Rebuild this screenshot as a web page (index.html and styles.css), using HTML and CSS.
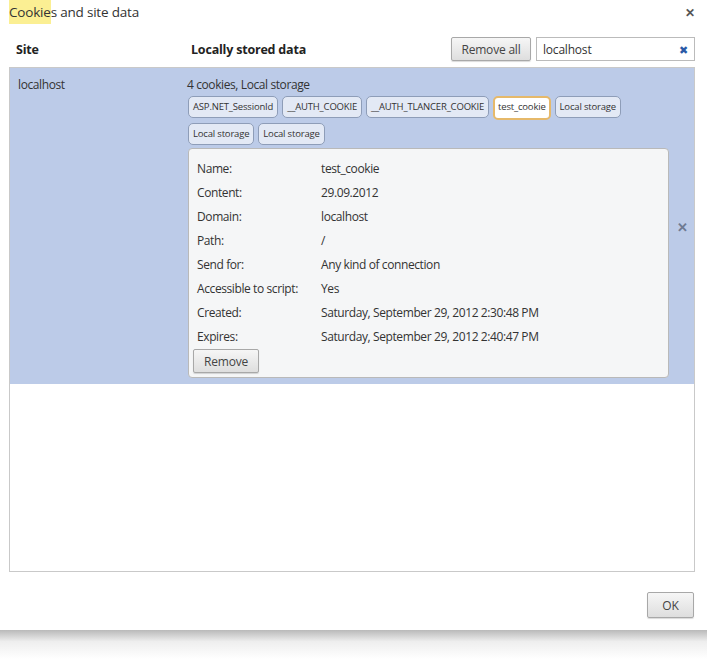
FILE: index.html
```html
<!DOCTYPE html>
<html>
<head>
<meta charset="utf-8">
<link rel="stylesheet" href="styles.css">
</head>
<body>
<div class="dialog">
  <div class="titlebar">
    <div class="title"><span class="hl">Cookie</span>s and site data</div>
    <div class="close">&#x2715;</div>
  </div>
  <div class="header">
    <div class="h-site">Site</div>
    <div class="h-data">Locally stored data</div>
    <button class="btn removeall">Remove all</button>
    <div class="search"><span>localhost</span><span class="sx">&#x2716;</span></div>
  </div>
  <div class="list">
    <div class="row">
      <div class="site">localhost</div>
      <div class="data">
        <div class="summary">4 cookies, Local storage</div>
        <div class="tags">
          <span class="tag">ASP.NET_SessionId</span>
          <span class="tag">__AUTH_COOKIE</span>
          <span class="tag">__AUTH_TLANCER_COOKIE</span>
          <span class="tag sel">test_cookie</span>
          <span class="tag">Local storage</span>
        </div>
        <div class="tags">
          <span class="tag">Local storage</span>
          <span class="tag">Local storage</span>
        </div>
        <div class="details">
          <div class="kv"><span class="k">Name:</span><span>test_cookie</span></div>
          <div class="kv"><span class="k">Content:</span><span>29.09.2012</span></div>
          <div class="kv"><span class="k">Domain:</span><span>localhost</span></div>
          <div class="kv"><span class="k">Path:</span><span>/</span></div>
          <div class="kv"><span class="k">Send for:</span><span>Any kind of connection</span></div>
          <div class="kv"><span class="k">Accessible to script:</span><span>Yes</span></div>
          <div class="kv"><span class="k">Created:</span><span>Saturday, September 29, 2012 2:30:48 PM</span></div>
          <div class="kv"><span class="k">Expires:</span><span>Saturday, September 29, 2012 2:40:47 PM</span></div>
          <button class="btn remove">Remove</button>
        </div>
      </div>
      <div class="rowx">&#x2715;</div>
    </div>
  </div>
  <div class="footer"><button class="btn ok">OK</button></div>
</div>
<div class="shadow"></div>
</body>
</html>
```
FILE: styles.css
```css
html, body { margin: 0; padding: 0; background: #fff; }
body { font-family: "Open Sans", "Noto Sans", sans-serif; color: #333; font-size: 12px; letter-spacing: -0.4px; width: 707px; height: 659px; overflow: hidden; }
.dialog { background: #fff; height: 630px; display: flex; flex-direction: column; position: relative; z-index: 1; }
.titlebar { display: flex; justify-content: space-between; align-items: center; height: 24px; padding: 0 12px 0 9px; }
.title { font-size: 13.5px; color: #333; letter-spacing: -0.2px; }
.hl { background: #fbef93; padding: 3px 0; }
.close { font-size: 12px; font-weight: bold; color: #555; }
.header { display: flex; align-items: center; height: 36px; padding: 0 12px 0 16px; margin-top: 7px; }
.h-site { font-weight: bold; font-size: 12.5px; width: 175px; color: #222; letter-spacing: -0.2px; }
.h-data { font-weight: bold; font-size: 12.5px; flex: 1; color: #222; letter-spacing: -0.2px; }
.btn { font-family: inherit; font-size: 12px; letter-spacing: -0.2px; color: #444; background: linear-gradient(#f6f6f6, #dedede); border: 1px solid #a8a8a8; border-radius: 2px; padding: 0; box-shadow: 0 1px 1px rgba(0,0,0,0.15); }
.removeall { width: 80px; height: 24px; margin-right: 5px; }
.search { height: 22px; border: 1px solid #bbb; display: flex; align-items: center; justify-content: space-between; padding: 0 6px; width: 145px; letter-spacing: -0.2px; }
.sx { color: #2b5aa7; font-size: 11px; }
.list { margin: 0 12px 0 9px; border: 1px solid #c9c9c9; height: 503px; }
.row { background: #bccbe8; display: flex; padding: 8px 0 6px 8px; position: relative; }
.site { width: 169px; }
.data { width: 482px; }
.summary { height: 18px; line-height: 18px; }
.tags { display: flex; gap: 4px; margin-top: 2px; margin-left: 1px; }
.tags + .tags { margin-top: 3px; }
.tag { font-size: 9.5px; border: 1px solid #8e9db8; border-radius: 5px; background: #e3e9f5; height: 20px; line-height: 20px; padding: 0 4px; color: #333; letter-spacing: -0.18px; }
.tag.sel { background: #fff; border: 2px solid #e6b96a; line-height: 18px; padding: 0 3px; }
.details { margin-top: 3px; margin-left: 1px; background: #f5f6f7; border: 1px solid #b9b9b9; border-radius: 4px; padding: 7px 4px 4px 4px; }
.kv { display: flex; height: 24px; align-items: center; padding-left: 4px; }
.k { width: 124px; }
.remove { width: 66px; height: 24px; margin-top: 1px; }
.rowx { position: absolute; right: 6px; top: 150px; color: #6e7a92; font-size: 13px; font-weight: bold; }
.footer { flex: 1; display: flex; justify-content: flex-end; align-items: flex-start; padding: 20px 13px 0 0; }
.ok { width: 47px; height: 26px; }
.shadow { height: 29px; background: linear-gradient(#b9b9b9, #eeeeee 40%, #fff); }
```
